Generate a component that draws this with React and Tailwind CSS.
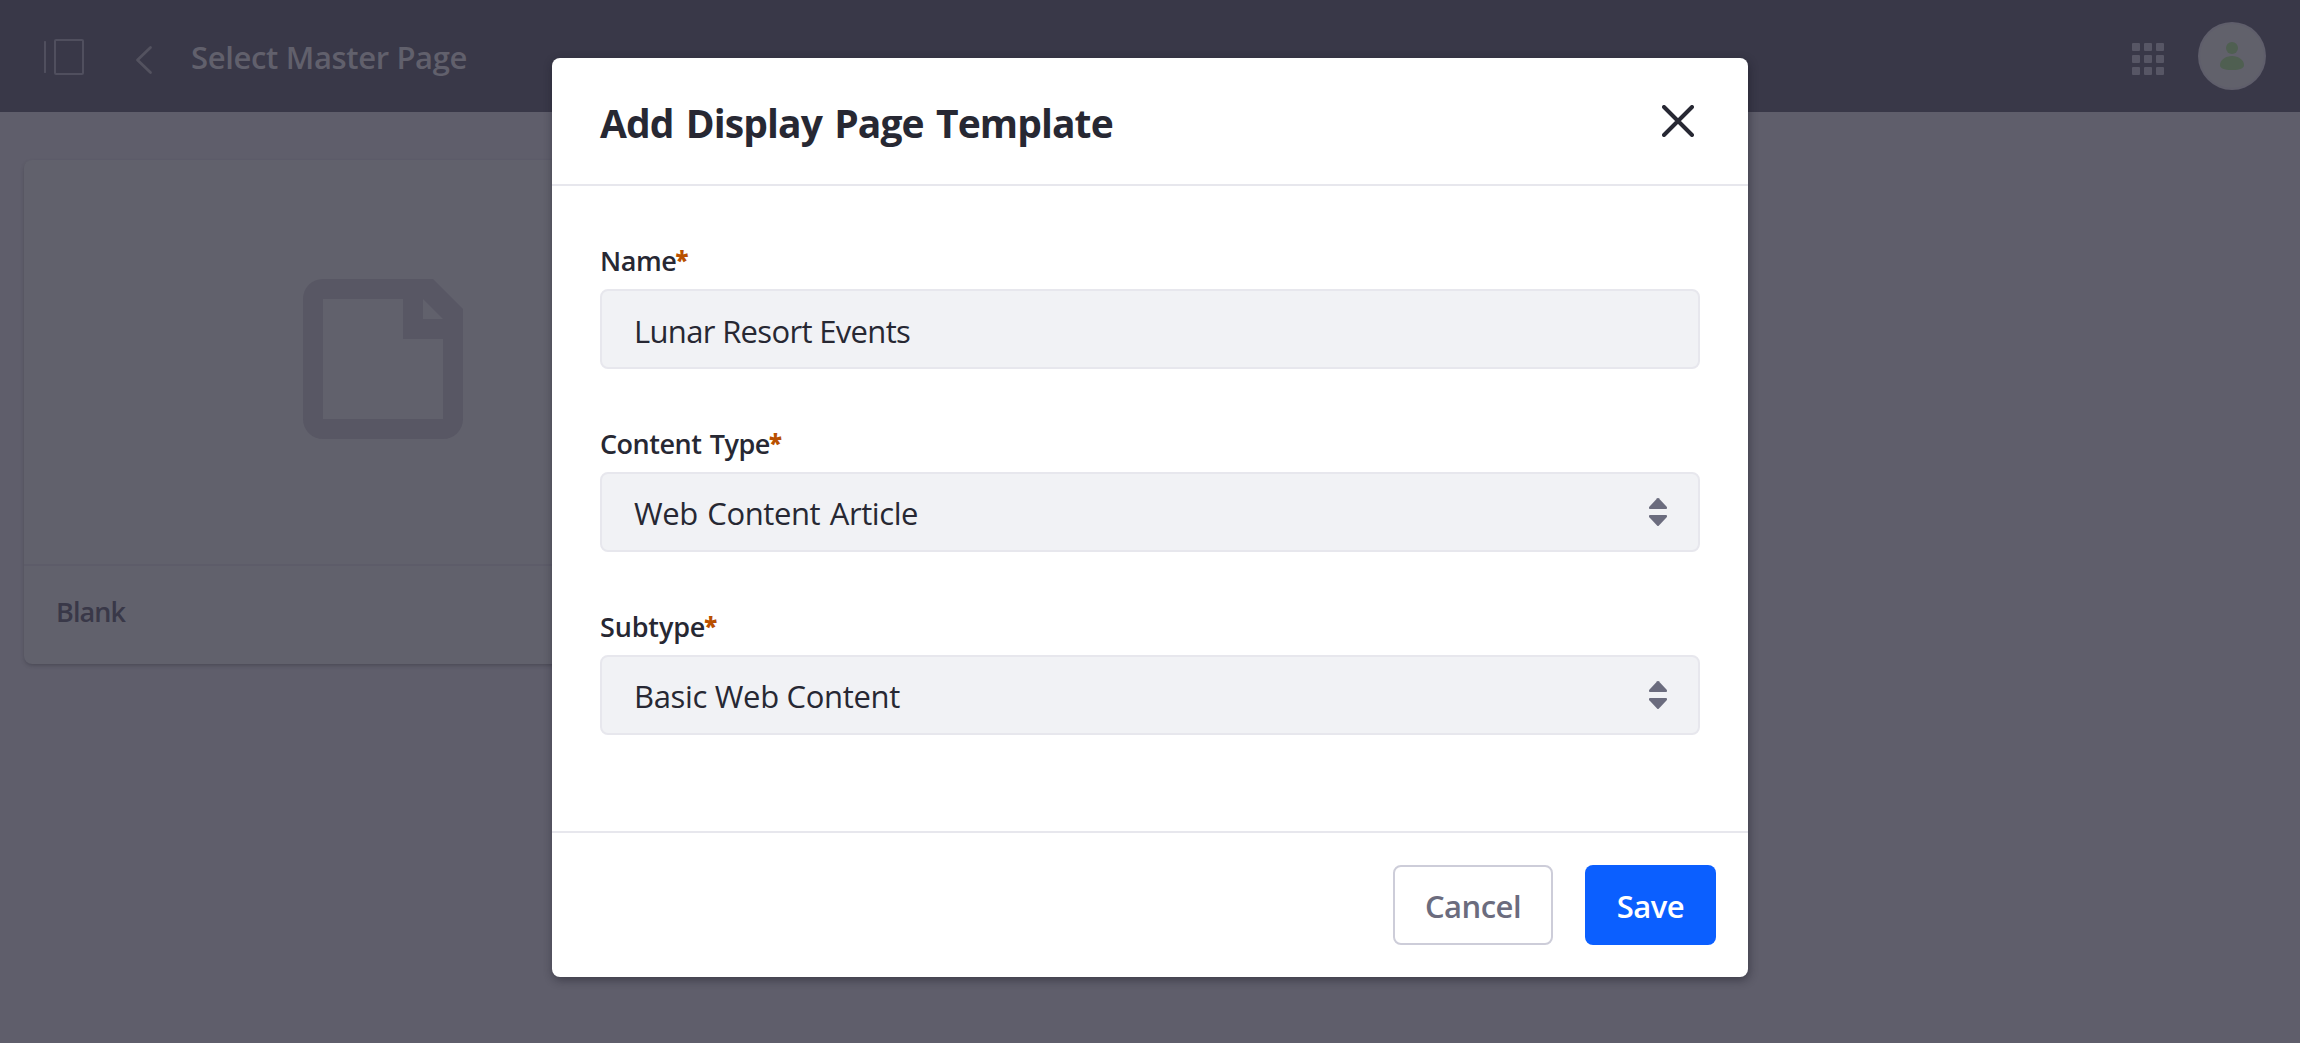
import React from "react";

function ProductMenuIcon() {
  return (
    <svg className="h-9 w-[42px]" viewBox="0 0 42 36" fill="none" aria-hidden="true">
      <rect x="0" y="2" width="2" height="32" rx="0.6" fill="#504f5e" />
      <rect x="11" y="1" width="28" height="34" rx="1" stroke="#504f5e" strokeWidth="2" />
    </svg>
  );
}

function AngleLeftIcon() {
  return (
    <svg className="h-8 w-8" viewBox="0 0 32 32" fill="none" aria-hidden="true">
      <path d="M24.500 3.400 11.500 16l13 12.600" stroke="#53525f" strokeWidth="2.8" strokeLinecap="round" strokeLinejoin="round" />
    </svg>
  );
}

function PageIcon() {
  return (
    <svg className="h-40 w-40" viewBox="0 0 160 160" aria-hidden="true">
      <path
        fill="#585764"
        fillRule="evenodd"
        d="M20 0h110l30 30v110a20 20 0 0 1-20 20H20a20 20 0 0 1-20-20V20A20 20 0 0 1 20 0ZM20 20v120h120V60h-40V20ZM120 20v20h20Z"
      />
    </svg>
  );
}

function CaretDoubleIcon() {
  return (
    <svg className="mr-[31px] h-7 w-[18px]" viewBox="0 0 18 28" fill="#6b6c7e" aria-hidden="true">
      <path d="M8.300.300a1 1 0 0 1 1.400 0l8 8.500c.7 1 .1 2.200-.7 2.200H1c-.8 0-1.400-1.200-.7-2.200Z" />
      <path d="M8.300 27.700a1 1 0 0 0 1.400 0l8-8.500c.7-1 .1-2.200-.7-2.200H1c-.8 0-1.400 1.200-.7 2.200Z" />
    </svg>
  );
}

function CloseIcon() {
  return (
    <svg className="h-8 w-8" viewBox="0 0 32 32" fill="none" aria-hidden="true">
      <path d="M2 2l28 28M30 2L2 30" stroke="#272833" strokeWidth="4" strokeLinecap="round" />
    </svg>
  );
}

function Label({ children, className }) {
  return (
    <div className="h-10 text-[27px] font-semibold leading-[40px]">
      <span className={className}>{children}</span>
      <span className="-ml-px align-[2px] text-[24px] font-extrabold leading-none text-[#b95000]">*</span>
    </div>
  );
}

function Field({ label, labelClass, value, valueClass, select }) {
  return (
    <div>
      <Label className={labelClass}>{label}</Label>
      <div className="mt-2 flex h-20 items-center justify-between rounded-lg border-2 border-[#e7e7ed] bg-[#f1f2f5] pl-8">
        <span className={valueClass}>{value}</span>
        {select && <CaretDoubleIcon />}
      </div>
    </div>
  );
}

export default function App() {
  return (
    <div className="relative h-[1043px] w-[2300px] overflow-hidden bg-[#5f5e6b] font-['Open_Sans','Noto_Sans',sans-serif] text-[#272833]">
      <header className="flex h-28 items-center justify-between bg-[#393848] pl-11 pr-[34px]">
        <div className="flex items-center">
          <div className="pt-[2px]">
            <ProductMenuIcon />
          </div>
          <div className="ml-10 pt-2">
            <AngleLeftIcon />
          </div>
          <h1 className="ml-[33px] pt-[2px] text-[31px] font-semibold leading-none tracking-[-0.35px] text-[#61606c]">
            Select Master Page
          </h1>
        </div>
        <div className="flex items-center gap-[34px]">
          <div className="mt-[6px] grid grid-cols-3 gap-1">
            {Array.from({ length: 9 }, (_, i) => (
              <span key={i} className="size-2 rounded-[1px] bg-[#575665]" />
            ))}
          </div>
          <svg className="size-[68px]" viewBox="0 0 68 68" aria-hidden="true">
            <circle cx="34" cy="34" r="34" fill="#5f5e6b" />
            <circle cx="34" cy="34" r="32" fill="#61616b" />
            <circle cx="34" cy="26" r="6" fill="#4f5f51" />
            <path d="M22 43c0-5 5.500-9 12-9s12 4 12 9c0 3.500-4 5-12 5s-12-1.500-12-5Z" fill="#4f5f51" />
          </svg>
        </div>
      </header>

      <main className="p-12 pl-6">
        <div className="h-[504px] w-[718px] rounded-lg bg-[#61616c] shadow-[0_2px_4px_-1px_rgba(39,40,51,0.45)]">
          <div className="flex h-[406px] items-start justify-center border-b-2 border-[#5d5c69] pt-[119px]">
            <PageIcon />
          </div>
          <div className="px-8 pt-[26px] text-[27px] font-semibold leading-[40px] tracking-[-0.9px] text-[#393848]">
            Blank
          </div>
        </div>
      </main>

      <div className="absolute inset-0 flex items-start justify-center pt-[58px]">
        <section className="flex h-[919px] w-[1196px] flex-col rounded-lg bg-white shadow-[1px_3px_10px_rgba(20,20,30,0.45)]">
          <div className="flex h-32 items-center justify-between border-b-2 border-[#e7e7ed] pl-12 pr-[54px]">
            <h2 className="pt-[2px] text-[39px] font-bold leading-none tracking-[-0.9px] [word-spacing:3px]">
              Add Display Page Template
            </h2>
            <CloseIcon />
          </div>
          <div className="flex flex-1 flex-col gap-[55px] px-12 pt-[55px]">
            <Field
              label="Name"
              labelClass="tracking-[-0.4px]"
              value="Lunar Resort Events"
              valueClass="pt-1 text-[31px] leading-none tracking-[-0.67px]"
            />
            <Field
              label="Content Type"
              labelClass="tracking-[-0.5px] [word-spacing:2px]"
              value="Web Content Article"
              valueClass="pt-[2px] text-[31px] leading-none tracking-[-0.42px] [word-spacing:2px]"
              select
            />
            <Field
              label="Subtype"
              labelClass="tracking-[-0.15px]"
              value="Basic Web Content"
              valueClass="pt-[2px] text-[31px] leading-none tracking-[-0.33px]"
              select
            />
          </div>
          <div className="flex h-[146px] items-start justify-end gap-8 border-t-2 border-[#e7e7ed] pr-8 pt-8 text-[31px] font-semibold leading-none tracking-[-0.5px]">
            <button className="h-20 w-40 rounded-lg border-2 border-[#cdcdd9] bg-white pt-[2px] text-[#6b6c7e]">
              Cancel
            </button>
            <button className="h-20 w-[131px] rounded-lg bg-[#0b5fff] pt-[2px] text-white">Save</button>
          </div>
        </section>
      </div>
    </div>
  );
}
